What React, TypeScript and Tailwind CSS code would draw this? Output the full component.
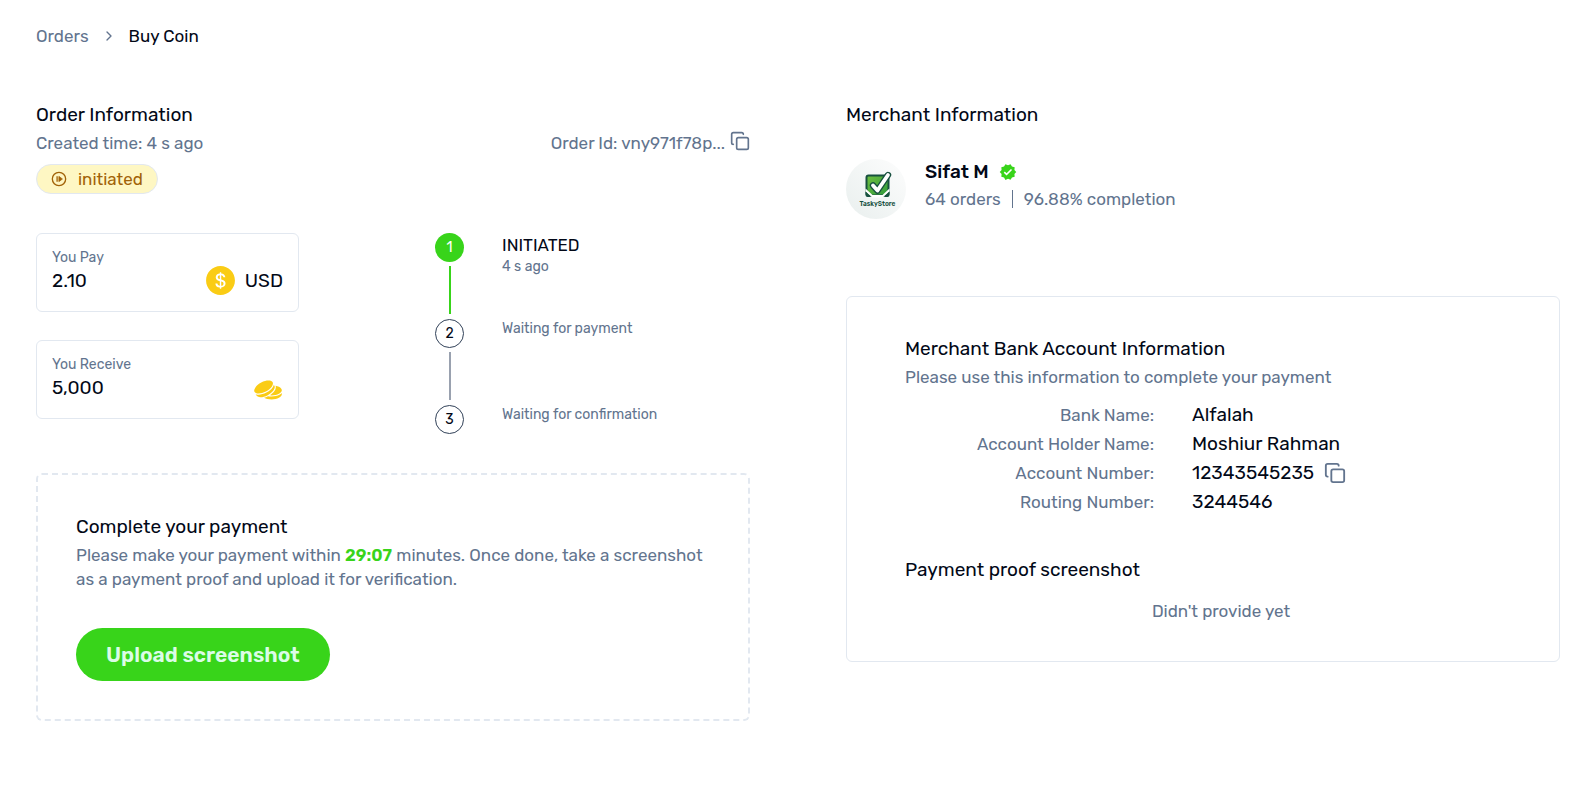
import { ChevronRight, Copy } from "lucide-react";
import { MdVerified } from "react-icons/md";
import { GiTwoCoins } from "react-icons/gi";
import { AiFillDollarCircle } from "react-icons/ai";

function CopyButton({ label, large = false }: { label: string; large?: boolean }) {
  return (
    <button type="button" aria-label={label} className="text-slate-500">
      <Copy className={large ? "size-[22px]" : "size-5"} strokeWidth={2} />
    </button>
  );
}

function SectionTitle({ children }: { children: string }) {
  return <h2 className="mb-0.5 text-[19px] leading-7">{children}</h2>;
}

function InitiatedIcon() {
  return (
    <svg viewBox="0 0 24 24" className="size-4" fill="none" stroke="currentColor" strokeWidth="2" aria-hidden="true">
      <circle cx="12" cy="12" r="10" />
      <path d="M9.200 7.800v8.400" strokeWidth="2.600" opacity="0.750" />
      <path d="M11.800 8l5.400 4-5.400 4z" fill="currentColor" strokeWidth="1" />
    </svg>
  );
}

function StoreLogo() {
  return (
    <svg viewBox="0 0 60 60" className="size-[60px] shrink-0" role="img" aria-label="TaskyStore">
      <defs>
        <linearGradient id="disc" x1="1" y1="0" x2="0" y2="1">
          <stop offset="0" stopColor="#fdfdfd" />
          <stop offset="1" stopColor="#e9efee" />
        </linearGradient>
        <linearGradient id="box" x1="0" y1="0" x2="1" y2="1">
          <stop offset="0" stopColor="#6fbf3f" />
          <stop offset="1" stopColor="#2f9a3c" />
        </linearGradient>
      </defs>
      <circle cx="30" cy="30" r="30" fill="url(#disc)" />
      <rect x="20.500" y="16.500" width="22" height="20" rx="2" fill="url(#box)" stroke="#17503f" strokeWidth="2" />
      <path d="M19.500 29.500l7 6.500h10l7-6.500v3l-7 6h-10l-7-6z" fill="#fff" />
      <path d="M19.500 32.500l5.500 5.500h-3.500q-2 0-2-2z" fill="#17503f" />
      <path d="M43.500 32.500L38 38h3.500q2 0 2-2z" fill="#17503f" />
      <path d="M27 26.500l4.500 5L42 16" fill="none" stroke="#17503f" strokeWidth="6.400" strokeLinecap="round" strokeLinejoin="round" />
      <path d="M27 26.500l4.500 5L42 16" fill="none" stroke="#fff" strokeWidth="3.800" strokeLinecap="round" strokeLinejoin="round" />
      <text x="31.500" y="46.500" textAnchor="middle" fontSize="6.500" fontWeight="600" fill="#17503f">TaskyStore</text>
    </svg>
  );
}

const steps = [
  { title: "INITIATED", note: "4 s ago", done: true },
  { title: "", note: "Waiting for payment", done: false },
  { title: "", note: "Waiting for confirmation", done: false },
];

const bankRows = [
  { label: "Bank Name:", value: "Alfalah" },
  { label: "Account Holder Name:", value: "Moshiur Rahman" },
  { label: "Account Number:", value: "12343545235", copy: true },
  { label: "Routing Number:", value: "3244546" },
];

export default function App() {
  return (
    <main className="bg-white pt-6 pr-[34px] pb-16 pl-9 font-['Rubik','Inter',sans-serif] text-[17px] leading-6 text-[#020817]">
      <nav aria-label="Breadcrumb" className="flex items-center">
        <a href="#orders" className="text-slate-500">Orders</a>
        <ChevronRight className="mx-3 size-4 text-slate-500" />
        <span aria-current="page">Buy Coin</span>
      </nav>

      <div className="mt-[53px] grid grid-cols-2 gap-24">
        <section>
          <SectionTitle>Order Information</SectionTitle>
          <div className="flex items-start justify-between text-slate-500">
            <p>Created time: 4 s ago</p>
            <div className="flex items-start gap-[5px]">
              <p>Order Id: vny971f78p...</p>
              <CopyButton label="Copy order id" />
            </div>
          </div>
          <div className="mt-[9px] flex">
            <span className="flex h-[30px] items-center gap-[11px] rounded-full border border-slate-200 bg-[#fef7c3] px-3.5 text-[#a16207]">
              <InitiatedIcon />
              initiated
            </span>
          </div>

          <div className="mt-[39px] grid grid-cols-2 gap-12">
            <div className="flex flex-col gap-7 pr-[70px]">
              <div className="flex h-[79px] items-start justify-between rounded-md border border-slate-200 px-[15px] pt-3.5">
                <div>
                  <p className="text-sm text-slate-500">You Pay</p>
                  <p className="text-[19px] leading-[26px]">2.10</p>
                </div>
                <div className="flex items-center gap-2 pt-4 text-[19px]">
                  <AiFillDollarCircle className="size-[33px] text-[#facc15]" />
                  USD
                </div>
              </div>
              <div className="flex h-[79px] items-start justify-between rounded-md border border-slate-200 px-[15px] pt-3.5">
                <div>
                  <p className="text-sm text-slate-500">You Receive</p>
                  <p className="text-[19px] leading-[26px]">5,000</p>
                </div>
                <div className="pt-5">
                  <GiTwoCoins className="size-[30px] text-[#facc15]" />
                </div>
              </div>
            </div>

            <ol className="pl-[18px]">
              {steps.map((step, i) => (
                <li key={step.note} className="flex gap-[38px]">
                  <div className="flex flex-col items-center">
                    <span
                      className={
                        step.done
                          ? "flex size-[29px] items-center justify-center rounded-full bg-[#38d41a] text-sm text-white"
                          : "flex size-[29px] items-center justify-center rounded-full border border-slate-700 text-sm"
                      }
                    >
                      {i + 1}
                    </span>
                    {i < steps.length - 1 && (
                      <span className={step.done ? "mt-1 mb-[5px] h-12 w-0.5 bg-[#38d41a]" : "mt-1 mb-[5px] h-12 w-0.5 bg-gray-400"} />
                    )}
                  </div>
                  <div>
                    {step.title && <p>{step.title}</p>}
                    <p className="text-sm text-slate-500">{step.note}</p>
                  </div>
                </li>
              ))}
            </ol>
          </div>

          <div className="mt-[39px] rounded-md border-2 border-dashed border-slate-200 p-[38px]">
            <SectionTitle>Complete your payment</SectionTitle>
            <p className="text-slate-500">
              Please make your payment within <strong className="font-semibold text-[#38d41a]">29:07</strong> minutes. Once
              done, take a screenshot as a payment proof and upload it for verification.
            </p>
            <button type="button" className="mt-[37px] h-[53px] rounded-full bg-[#38d41a] px-[30px] text-[21px] font-semibold text-green-100">
              Upload screenshot
            </button>
          </div>
        </section>

        <section>
          <SectionTitle>Merchant Information</SectionTitle>
          <div className="mt-[30px] flex gap-[19px]">
            <StoreLogo />
            <div>
              <p className="mb-0.5 flex items-center gap-2.5 text-[19px] leading-[26px] font-medium">
                Sifat M <MdVerified className="size-[18px] text-[#38d41a]" />
              </p>
              <p className="flex items-center text-slate-500">
                64 orders <span className="mx-[11px] h-[18px] w-px bg-slate-500" /> 96.88% completion
              </p>
            </div>
          </div>

          <div className="mt-[77px] rounded-md border border-slate-200 px-[58px] py-[38px]">
            <SectionTitle>Merchant Bank Account Information</SectionTitle>
            <p className="text-slate-500">Please use this information to complete your payment</p>
            <dl className="mt-[11px]">
              {bankRows.map((row) => (
                <div key={row.label} className="flex h-[29px] items-center gap-[38px]">
                  <dt className="w-[249px] text-right text-slate-500">{row.label}</dt>
                  <dd className="flex items-center gap-2.5 text-[19px]">
                    {row.value}
                    {row.copy && <CopyButton label="Copy account number" large />}
                  </dd>
                </div>
              ))}
            </dl>
            <div className="mt-10">
              <SectionTitle>Payment proof screenshot</SectionTitle>
            </div>
            <p className="mt-[15px] pl-9 text-center text-slate-500">Didn't provide yet</p>
          </div>
        </section>
      </div>
    </main>
  );
}
